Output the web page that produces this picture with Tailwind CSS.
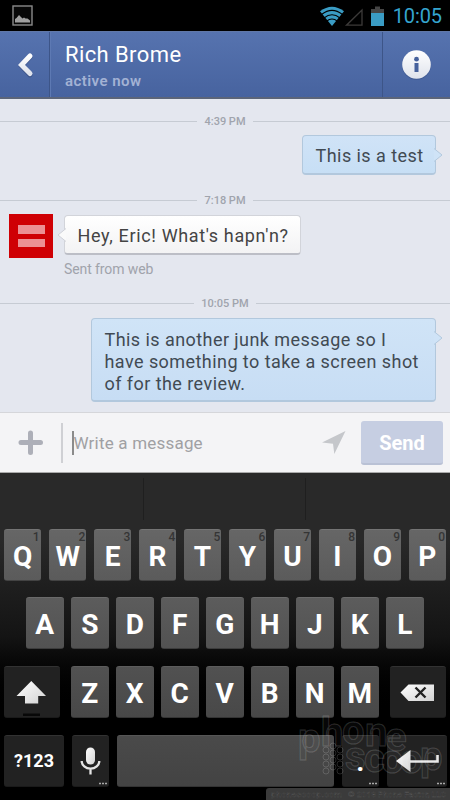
<!DOCTYPE html>
<html lang="en">
<head>
<meta charset="utf-8">
<meta name="viewport" content="width=device-width, initial-scale=1">
<title>Messages</title>
<script src="https://cdn.jsdelivr.net/npm/@tailwindcss/browser@4"></script>
</head>
<body class="bg-black">
<div class="relative flex h-[800px] w-[450px] flex-col overflow-hidden font-['Roboto',sans-serif]">

  <!-- Status bar -->
  <div class="flex h-[31px] shrink-0 items-center bg-black pr-2 pl-3">
    <svg class="h-[21px] w-[21px]" viewBox="0 0 21 21"><rect x="1" y="1" width="19" height="19" fill="#080808" stroke="#8a8a8a" stroke-width="1.4"/><path d="M3 17.500V14l1.500-1 2.500-3 3.500 3.500 1.500-1 1.500 1h2l2.500 2v2z" fill="#a0a0a0"/></svg>
    <div class="ml-auto flex items-center">
      <svg class="h-[20px] w-[66px]" viewBox="0 0 66 20">
        <path d="M1 5.200Q13 -3.800 25 5.200L13 20z" fill="#3a9cc4"/>
        <g fill="none" stroke="#000" stroke-width="1.1"><path d="M2.500 8.500Q13 .3 23.500 8.500"/><path d="M5 12Q13 5.600 21 12"/><path d="M7.500 15.300Q13 10.800 18.500 15.300"/></g>
        <path d="M27.500 19.200H43V4z" fill="none" stroke="#3c3a39" stroke-width="1.300"/>
        <path d="M52 7V3h4V.500h5V3h4v4z" fill="#454545"/><path d="M52 7h13v13H52z" fill="#3a9cc4"/>
      </svg>
      <span class="ml-[8px] text-[20px] leading-[20px] tracking-[-0.1px] text-[#35a5cf]">10:05</span>
    </div>
  </div>

  <!-- Conversation header -->
  <div class="flex h-[68px] shrink-0 border-t border-b-2 border-t-[#6078a8] border-b-[#5c6579] bg-linear-to-b from-[#5673af] to-[#47639f]">
    <div class="flex w-[50px] items-center justify-center border-r border-[#3d5588]">
      <svg class="h-[26px] w-[18px]" viewBox="0 0 18 26"><defs><linearGradient id="w" x2="0" y2="1"><stop stop-color="#fff"/><stop offset="1" stop-color="#dfe3ec"/></linearGradient></defs><path d="M14 4L5.500 13l8.500 9" fill="none" stroke="#3c5388" stroke-width="4.800" stroke-linecap="round" transform="translate(0 1)"/><path d="M14 4L5.500 13l8.500 8.500" fill="none" stroke="url(#w)" stroke-width="5" stroke-linecap="round"/></svg>
    </div>
    <div class="flex-1 border-l border-[#5d79b3] pt-[10px] pl-[14px]">
      <div class="text-[22px] leading-[26px] tracking-[0.4px] text-white">Rich Brome</div>
      <div class="mt-[3px] text-[15px] leading-[20px] font-semibold tracking-[0.45px] text-[#a3b2d4]">active now</div>
    </div>
    <div class="flex w-[68px] items-center justify-center border-l border-[#3d5588]">
      <svg class="h-[31px] w-[31px]" viewBox="0 0 31 31"><circle cx="15.500" cy="16.200" r="14.500" fill="#3f5a93"/><circle cx="15.500" cy="15.500" r="14.300" fill="url(#w)"/><circle cx="15.500" cy="10.200" r="2.400" fill="#46619c"/><path d="M13.500 14h4v9h-4z" fill="#46619c"/></svg>
    </div>
  </div>

  <!-- Messages -->
  <div class="flex h-[313px] shrink-0 flex-col bg-[#e4e7ef]">
    <div class="mt-[14px] flex h-[16px] items-center gap-[7px] text-[11px] font-medium text-[#a0a4ad]"><i class="h-px flex-1 bg-[#c6cbd3]"></i><span class="pt-[2px] leading-[16px]">4:39 PM</span><i class="h-px flex-1 bg-[#c6cbd3]"></i></div>
    <div class="relative mt-[6px] mr-[14px] h-[40px] w-[134px] self-end rounded-[4px] border border-b-2 border-[#b2c8dd] bg-linear-to-b from-[#d0e3f7] to-[#c7dff5] pt-[9px] pl-[12.500px] text-[18px] leading-[22px] tracking-[0.45px] whitespace-nowrap text-[#414a53]">This is a test
      <svg class="absolute top-[12px] -right-[8px] h-[14px] w-[9px]" viewBox="0 0 9 14"><path d="M0 .5L8 7l-8 6.500" fill="#cfe3f7" stroke="#b2c8dd"/></svg>
    </div>
    <div class="mt-[17px] flex h-[16px] items-center gap-[7px] text-[11px] font-medium text-[#a0a4ad]"><i class="h-px flex-1 bg-[#c6cbd3]"></i><span class="pt-[2px] leading-[16px]">7:18 PM</span><i class="h-px flex-1 bg-[#c6cbd3]"></i></div>
    <div class="mt-[6px] flex pl-[9px]">
      <div class="flex h-[44px] w-[44px] flex-col items-center justify-center gap-[5px] bg-[#cf0004]"><i class="h-[8.500px] w-[27px] bg-[#ec9094]"></i><i class="h-[8.500px] w-[27px] bg-[#ec9094]"></i></div>
      <div class="ml-[11px]">
        <div class="relative mt-[1px] h-[40px] w-[237px] rounded-[4px] border border-b-2 border-[#d2d4da] border-b-[#bcbec6] bg-linear-to-b from-white to-[#f3f3f4] pt-[9px] pl-[12.500px] text-[18px] leading-[22px] tracking-[0.64px] whitespace-nowrap text-[#444]">Hey, Eric! What's hapn'n?
          <svg class="absolute top-[12px] -left-[8px] h-[14px] w-[9px]" viewBox="0 0 9 14"><path d="M9 .5L1 7l8 6.500" fill="#fafafa" stroke="#cfd1d8"/></svg>
        </div>
        <div class="mt-[5px] text-[14px] leading-[18px] tracking-[-0.1px] text-[#a0a3ab]">Sent from web</div>
      </div>
    </div>
    <div class="mt-[17px] flex h-[16px] items-center gap-[7px] text-[11px] font-medium text-[#a0a4ad]"><i class="h-px flex-1 bg-[#c6cbd3]"></i><span class="pt-[2px] leading-[16px]">10:05 PM</span><i class="h-px flex-1 bg-[#c6cbd3]"></i></div>
    <div class="relative mt-[7px] mr-[14px] h-[84px] w-[345px] self-end rounded-[4px] border border-b-2 border-[#b2c8dd] bg-linear-to-b from-[#d0e4f7] to-[#c7ddf4] pt-[9.500px] pl-[12.500px] text-[18px] leading-[22px] tracking-[0.44px] whitespace-nowrap text-[#414a53]">This is another junk message so I<br>have something to take a screen shot<br>of for the review.
      <svg class="absolute top-[12px] -right-[8px] h-[14px] w-[9px]" viewBox="0 0 9 14"><path d="M0 .5L8 7l-8 6.500" fill="#cfe3f7" stroke="#b2c8dd"/></svg>
    </div>
  </div>

  <!-- Composer -->
  <div class="flex h-[61px] shrink-0 items-center border-t border-b border-t-[#d5d6da] border-b-[#aaa] bg-[#f4f4f6] pr-[7px] pl-[18px]">
    <svg class="h-[25px] w-[25px]" viewBox="0 0 25 25"><path d="M12.500 3v19.500M3 12.500h19.500" stroke="#adafb8" stroke-width="5" stroke-linecap="round"/></svg>
    <div class="ml-[18px] h-[40px] w-[2px] bg-[#cfd0d4]"></div>
    <div class="ml-[9px] h-[24px] w-[1.500px] bg-[#8b8b8b]"></div>
    <div class="text-[17px] leading-[22px] tracking-[0.2px] text-[#a0a0a3]">Write a message</div>
    <svg class="mr-[15px] ml-auto h-[23px] w-[24px]" viewBox="0 0 24 23"><path d="M23.500 0L12.300 23l-1.300-10.300L0 11.500z" fill="#c5c7cb"/></svg>
    <div class="flex h-[44px] w-[82px] items-center justify-center rounded-[3px] border-b-2 border-[#b9c1d5] bg-[#c6cee2] pt-[2px] text-[20px] font-bold text-white">Send</div>
  </div>

  <!-- Keyboard -->
  <div class="flex h-[327px] shrink-0 flex-col bg-linear-to-b from-[#292929] from-20% via-[#141414] via-50% to-black to-75%">
    <div class="flex h-[55.600px] shrink-0 bg-[#292929] pt-[5px]">
      <div class="h-[42px] w-[144px] border-r border-[#1f1f1f]"></div>
      <div class="h-[42px] w-[162px] border-r border-[#1f1f1f]"></div>
    </div>
    <div class="flex flex-col gap-[16.700px] text-[28px] font-bold text-white">
      <div class="flex h-[52px] gap-[7.500px] px-[4px] leading-[53px]">
        <div class="relative w-[37.500px] rounded-[3px] border-t border-b border-t-[#747474] border-b-[#434343] bg-linear-to-b from-[#666] to-[#5b5b5b] text-center">Q<span class="absolute top-0 right-[2px] text-[12px] leading-[15px] font-medium text-[#353535]">1</span></div>
        <div class="relative w-[37.500px] rounded-[3px] border-t border-b border-t-[#747474] border-b-[#434343] bg-linear-to-b from-[#666] to-[#5b5b5b] text-center">W<span class="absolute top-0 right-[1px] text-[12px] leading-[15px] font-medium text-[#353535]">2</span></div>
        <div class="relative w-[37.500px] rounded-[3px] border-t border-b border-t-[#747474] border-b-[#434343] bg-linear-to-b from-[#666] to-[#5b5b5b] text-center">E<span class="absolute top-0 right-[1px] text-[12px] leading-[15px] font-medium text-[#353535]">3</span></div>
        <div class="relative w-[37.500px] rounded-[3px] border-t border-b border-t-[#747474] border-b-[#434343] bg-linear-to-b from-[#666] to-[#5b5b5b] text-center">R<span class="absolute top-0 right-[1px] text-[12px] leading-[15px] font-medium text-[#353535]">4</span></div>
        <div class="relative w-[37.500px] rounded-[3px] border-t border-b border-t-[#747474] border-b-[#434343] bg-linear-to-b from-[#666] to-[#5b5b5b] text-center">T<span class="absolute top-0 right-[1px] text-[12px] leading-[15px] font-medium text-[#353535]">5</span></div>
        <div class="relative w-[37.500px] rounded-[3px] border-t border-b border-t-[#747474] border-b-[#434343] bg-linear-to-b from-[#666] to-[#5b5b5b] text-center">Y<span class="absolute top-0 right-[1px] text-[12px] leading-[15px] font-medium text-[#353535]">6</span></div>
        <div class="relative w-[37.500px] rounded-[3px] border-t border-b border-t-[#747474] border-b-[#434343] bg-linear-to-b from-[#666] to-[#5b5b5b] text-center">U<span class="absolute top-0 right-[1px] text-[12px] leading-[15px] font-medium text-[#353535]">7</span></div>
        <div class="relative w-[37.500px] rounded-[3px] border-t border-b border-t-[#747474] border-b-[#434343] bg-linear-to-b from-[#666] to-[#5b5b5b] text-center">I<span class="absolute top-0 right-[1px] text-[12px] leading-[15px] font-medium text-[#353535]">8</span></div>
        <div class="relative w-[37.500px] rounded-[3px] border-t border-b border-t-[#747474] border-b-[#434343] bg-linear-to-b from-[#666] to-[#5b5b5b] text-center">O<span class="absolute top-0 right-[1px] text-[12px] leading-[15px] font-medium text-[#353535]">9</span></div>
        <div class="relative w-[37.500px] rounded-[3px] border-t border-b border-t-[#747474] border-b-[#434343] bg-linear-to-b from-[#666] to-[#5b5b5b] text-center">P<span class="absolute top-0 right-[1px] text-[12px] leading-[15px] font-medium text-[#353535]">0</span></div>
      </div>
      <div class="flex h-[52px] gap-[7.500px] pl-[26px] leading-[53px]">
        <div class="w-[37.500px] rounded-[3px] border-t border-b border-t-[#6a6a6a] border-b-[#3c3c3c] bg-linear-to-b from-[#5c5c5c] to-[#525252] text-center">A</div>
        <div class="w-[37.500px] rounded-[3px] border-t border-b border-t-[#6a6a6a] border-b-[#3c3c3c] bg-linear-to-b from-[#5c5c5c] to-[#525252] text-center">S</div>
        <div class="w-[37.500px] rounded-[3px] border-t border-b border-t-[#6a6a6a] border-b-[#3c3c3c] bg-linear-to-b from-[#5c5c5c] to-[#525252] text-center">D</div>
        <div class="w-[37.500px] rounded-[3px] border-t border-b border-t-[#6a6a6a] border-b-[#3c3c3c] bg-linear-to-b from-[#5c5c5c] to-[#525252] text-center">F</div>
        <div class="w-[37.500px] rounded-[3px] border-t border-b border-t-[#6a6a6a] border-b-[#3c3c3c] bg-linear-to-b from-[#5c5c5c] to-[#525252] text-center">G</div>
        <div class="w-[37.500px] rounded-[3px] border-t border-b border-t-[#6a6a6a] border-b-[#3c3c3c] bg-linear-to-b from-[#5c5c5c] to-[#525252] text-center">H</div>
        <div class="w-[37.500px] rounded-[3px] border-t border-b border-t-[#6a6a6a] border-b-[#3c3c3c] bg-linear-to-b from-[#5c5c5c] to-[#525252] text-center">J</div>
        <div class="w-[37.500px] rounded-[3px] border-t border-b border-t-[#6a6a6a] border-b-[#3c3c3c] bg-linear-to-b from-[#5c5c5c] to-[#525252] text-center">K</div>
        <div class="w-[37.500px] rounded-[3px] border-t border-b border-t-[#6a6a6a] border-b-[#3c3c3c] bg-linear-to-b from-[#5c5c5c] to-[#525252] text-center">L</div>
      </div>
      <div class="flex h-[52px] gap-[7.500px] pl-[4px] leading-[53px]">
        <div class="mr-[4px] w-[55.500px] rounded-[3px] border-t border-b border-t-[#323232] border-b-[#1a1a1a] bg-[#222]"><svg class="h-[50px] w-[55px]" viewBox="0 0 55 50"><defs><linearGradient id="g" x2="1" y2="1"><stop stop-color="#fff"/><stop offset="1" stop-color="#d2d2d2"/></linearGradient></defs><path d="M27.300 14L42 29h-7.800v7.500H21V29h-8.500z" fill="url(#g)"/><path d="M19 46.500h17v2.500H19z" fill="#080808"/></svg></div>
        <div class="w-[37.500px] rounded-[3px] border-t border-b border-t-[#5c5c5c] border-b-[#343434] bg-linear-to-b from-[#515151] to-[#484848] text-center">Z</div>
        <div class="w-[37.500px] rounded-[3px] border-t border-b border-t-[#5c5c5c] border-b-[#343434] bg-linear-to-b from-[#515151] to-[#484848] text-center">X</div>
        <div class="w-[37.500px] rounded-[3px] border-t border-b border-t-[#5c5c5c] border-b-[#343434] bg-linear-to-b from-[#515151] to-[#484848] text-center">C</div>
        <div class="w-[37.500px] rounded-[3px] border-t border-b border-t-[#5c5c5c] border-b-[#343434] bg-linear-to-b from-[#515151] to-[#484848] text-center">V</div>
        <div class="w-[37.500px] rounded-[3px] border-t border-b border-t-[#5c5c5c] border-b-[#343434] bg-linear-to-b from-[#515151] to-[#484848] text-center">B</div>
        <div class="w-[37.500px] rounded-[3px] border-t border-b border-t-[#5c5c5c] border-b-[#343434] bg-linear-to-b from-[#515151] to-[#484848] text-center">N</div>
        <div class="w-[37.500px] rounded-[3px] border-t border-b border-t-[#5c5c5c] border-b-[#343434] bg-linear-to-b from-[#515151] to-[#484848] text-center">M</div>
        <div class="ml-[4px] w-[55.500px] rounded-[3px] border-t border-b border-t-[#323232] border-b-[#1a1a1a] bg-[#222]"><svg class="h-[50px] w-[55px]" viewBox="0 0 55 50"><path d="M10.500 25.500L18.500 17.500H44V34H18.500z" fill="url(#g)"/><path d="M25.500 20.500l10 10M35.500 20.500l-10 10" stroke="#222" stroke-width="2.400"/></svg></div>
      </div>
      <div class="flex h-[52px] gap-[7.500px] pl-[4px]">
        <div class="flex w-[60px] items-center justify-center rounded-[3px] border-t border-b border-t-[#323232] border-b-[#1a1a1a] bg-[#222] text-[18px]">?123</div>
        <div class="w-[37.500px] rounded-[3px] border-t border-b border-t-[#323232] border-b-[#1a1a1a] bg-[#222]"><svg class="h-[50px] w-[37px]" viewBox="0 0 37 50"><rect x="14" y="11.500" width="9" height="17" rx="4.500" fill="url(#g)"/><path d="M9.700 25a8.800 7.700 0 0 0 17.600 0M18.500 32.500v6" fill="none" stroke="#e4e4e4" stroke-width="2.300"/><path d="M27 47.500h8" stroke="#aaa" stroke-width="1.500" stroke-dasharray="2 1"/></svg></div>
        <div class="w-[217.500px] rounded-[3px] border-t border-b border-t-[#565656] border-b-[#333] bg-linear-to-b from-[#4a4a4a] to-[#434343]"></div>
        <div class="relative w-[37.500px] rounded-[3px] border-t border-b border-t-[#323232] border-b-[#1a1a1a] bg-[#222] text-center leading-[52px]">.<svg class="absolute inset-0 h-[50px] w-[37px]" viewBox="0 0 37 50"><path d="M27 47.500h8" stroke="#aaa" stroke-width="1.500" stroke-dasharray="2 1"/></svg></div>
        <div class="w-[60px] rounded-[3px] border-t border-b border-t-[#323232] border-b-[#1a1a1a] bg-[#222]"><svg class="h-[50px] w-[60px]" viewBox="0 0 60 50"><path d="M9 25L23.500 14v22z" fill="url(#g)"/><path d="M23 25.500h27.500V19" fill="none" stroke="#e8e8e8" stroke-width="2.600"/><path d="M50 47.500h8" stroke="#aaa" stroke-width="1.500" stroke-dasharray="2 1"/></svg></div>
      </div>
    </div>
  </div>

  <!-- Watermark -->
  <svg class="absolute right-0 bottom-0 h-[95px] w-[185px]" viewBox="265 705 185 95" font-family="Roboto, sans-serif" font-weight="700">
    <g fill="#fff" fill-opacity=".03" stroke="#fff" stroke-opacity=".17" font-size="40">
      <text x="298 321 342 365 385" y="752 746 744 746 751">phone</text>
      <text x="345 364 381 400 420" y="770 772 773 773 770">scoop</text>
    </g>
    <g fill="none" stroke="#fff" stroke-opacity=".15"><circle cx="326" cy="750" r="3"/><circle cx="333" cy="746" r="3"/><circle cx="340" cy="750" r="3"/><circle cx="326" cy="757" r="3"/><circle cx="333" cy="753" r="3"/><circle cx="340" cy="757" r="3"/><circle cx="326" cy="764" r="3"/><circle cx="333" cy="760" r="3"/><circle cx="340" cy="764" r="3"/><circle cx="326" cy="771" r="3"/><circle cx="333" cy="767" r="3"/><circle cx="340" cy="771" r="3"/></g>
    <path d="M266 800v-9q0-3 3-3h181v12z" fill="#3b3b3b"/>
    <g font-size="8" font-weight="500" fill="#2c2c2c" stroke="#565656" stroke-width=".3"><text x="271" y="797" textLength="71" lengthAdjust="spacingAndGlyphs">phonescoop.com</text><text x="348" y="797" textLength="98" lengthAdjust="spacingAndGlyphs">© 2013 Phone Factor, LLC</text></g>
  </svg>
</div>
</body>
</html>
